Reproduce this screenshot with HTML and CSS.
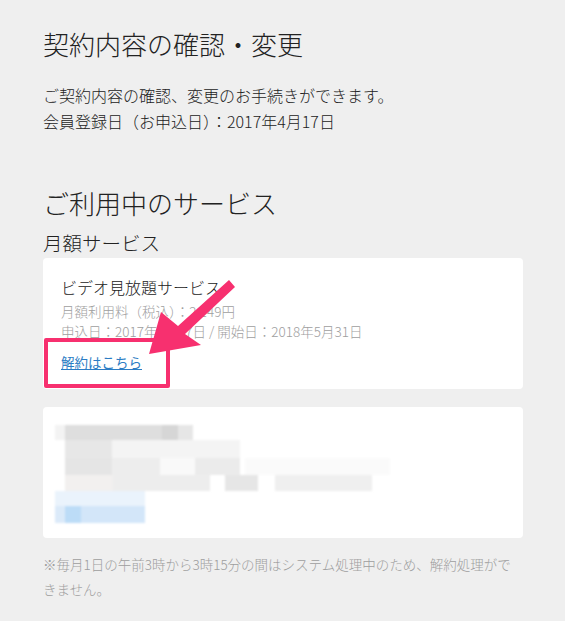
FILE: index.html
```html
<!DOCTYPE html>
<html lang="ja">
<head>
    <meta charset="UTF-8">
    <meta name="viewport" content="width=device-width, initial-scale=1.0">
    <title>契約内容の確認・変更</title>
    <link rel="stylesheet" href="styles.css">
</head>
<body>
    <div class="container">
        <h1 class="page-title">契約内容の確認・変更</h1>
        <p class="lead">ご契約内容の確認、変更のお手続きができます。<br>会員登録日（お申込日）：2017年4月17日</p>

        <h2 class="section-title">ご利用中のサービス</h2>
        <h3 class="sub-title">月額サービス</h3>

        <div class="card">
            <div class="card-name">ビデオ見放題サービス</div>
            <div class="card-meta">月額利用料（税込）：2,149円</div>
            <div class="card-meta">申込日：2017年4月17日 / 開始日：2018年5月31日</div>
            <a class="cancel-link" href="#">解約はこちら</a>

            <!-- annotation: highlight box + arrow -->
            <div class="highlight"></div>
            <svg class="arrow" width="200" height="110" viewBox="0 0 200 110">
                <polygon points="106,96 118,54 135,68 186,22 192,29 142,76 158,87" fill="#f7306f"/>
            </svg>
        </div>

        <div class="card card-blurred">
            <svg class="mosaic" width="480" height="131" viewBox="0 0 480 131">
                <defs>
                    <filter id="soft"><feGaussianBlur stdDeviation="1.2"/></filter>
                </defs>
                <g filter="url(#soft)">
                    <rect x="12" y="18" width="10" height="15" fill="#f3f3f3"/>
                    <rect x="22" y="18" width="97" height="15" fill="#dedede"/>
                    <rect x="119" y="18" width="16" height="15" fill="#d6d6d6"/>
                    <rect x="135" y="18" width="15" height="15" fill="#e6e6e6"/>
                    <rect x="22" y="33" width="47" height="18" fill="#e7e7e7"/>
                    <rect x="69" y="33" width="128" height="18" fill="#f4f4f4"/>
                    <rect x="22" y="51" width="47" height="17" fill="#e5e5e5"/>
                    <rect x="69" y="51" width="48" height="17" fill="#ededed"/>
                    <rect x="117" y="51" width="35" height="17" fill="#f9f9f9"/>
                    <rect x="152" y="51" width="45" height="17" fill="#ebebeb"/>
                    <rect x="202" y="51" width="145" height="17" fill="#fafafa"/>
                    <rect x="22" y="68" width="48" height="16" fill="#f2f0ef"/>
                    <rect x="70" y="68" width="97" height="16" fill="#ededed"/>
                    <rect x="182" y="68" width="33" height="16" fill="#e6e6e6"/>
                    <rect x="232" y="68" width="97" height="16" fill="#efefef"/>
                    <rect x="12" y="84" width="90" height="15" fill="#eaf3fc"/>
                    <rect x="12" y="99" width="10" height="17" fill="#dbeaf9"/>
                    <rect x="22" y="99" width="16" height="17" fill="#bcdcf7"/>
                    <rect x="38" y="99" width="64" height="17" fill="#d3e6f9"/>
                </g>
            </svg>
        </div>

        <p class="note">※毎月1日の午前3時から3時15分の間はシステム処理中のため、解約処理ができません。</p>
    </div>
</body>
</html>
```

FILE: styles.css
```css
body {
    margin: 0;
    padding: 0;
    background-color: #efefef;
    color: #222;
    font-family: "Noto Sans CJK JP", "Noto Sans", sans-serif;
}

.container {
    width: 480px;
    padding: 26px 0 20px 43px;
}

.page-title {
    margin: 0;
    font-size: 26px;
    font-weight: 300;
    line-height: 36px;
}

.lead {
    margin: 20px 0 0;
    font-size: 16px;
    font-weight: 300;
    line-height: 26px;
    color: #222;
}

.section-title {
    margin: 51px 0 0;
    font-size: 26px;
    font-weight: 300;
    line-height: 36px;
}

.sub-title {
    margin: 8px 0 0;
    font-size: 19.5px;
    font-weight: 300;
    line-height: 28px;
}

.card {
    position: relative;
    box-sizing: border-box;
    height: 131px;
    margin-top: 1px;
    padding: 17px 18px;
    background-color: #fff;
    border-radius: 4px;
}

.card-name {
    font-size: 16px;
    font-weight: 300;
    line-height: 24px;
    margin-bottom: 2px;
    color: #222;
}

.card-meta {
    font-size: 13.5px;
    font-weight: 300;
    line-height: 20px;
    color: #9e9e9e;
}

.cancel-link {
    display: inline-block;
    margin-top: 11px;
    font-size: 13.5px;
    line-height: 20px;
    color: #2b7cc4;
    text-decoration: underline;
}

.highlight {
    position: absolute;
    left: 1px;
    top: 80px;
    width: 126px;
    height: 50px;
    box-sizing: border-box;
    border: 4px solid #f7306f;
    border-radius: 2px;
}

.arrow {
    position: absolute;
    left: 0;
    top: 0;
    overflow: visible;
}

.card-blurred {
    margin-top: 18px;
    padding: 0;
}

.mosaic {
    display: block;
}

.note {
    margin: 14px 0 0;
    font-size: 13.5px;
    font-weight: 300;
    line-height: 25px;
    color: #9e9e9e;
}
```
